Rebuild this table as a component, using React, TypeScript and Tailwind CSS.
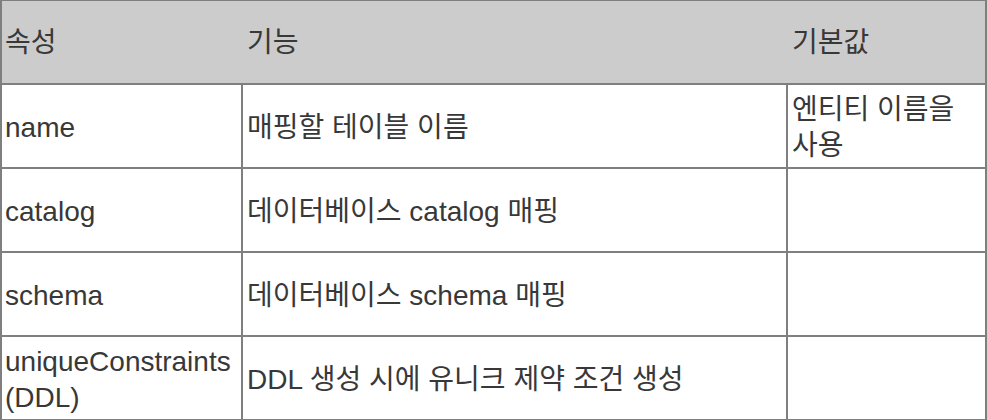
const rows = [
  { attr: ["name"], desc: "매핑할 테이블 이름", def: ["엔티티 이름을", "사용"] },
  { attr: ["catalog"], desc: "데이터베이스 catalog 매핑", def: [] },
  { attr: ["schema"], desc: "데이터베이스 schema 매핑", def: [] },
  { attr: ["uniqueConstraints", "(DDL)"], desc: "DDL 생성 시에 유니크 제약 조건 생성", def: [] },
]

export default function App() {
  return (
    <div
      className="w-[987px] h-[420px] overflow-hidden bg-white text-[#383838] text-[28px] leading-[36px]"
      style={{ fontFamily: '"Liberation Sans", Arial, "Noto Sans CJK KR", sans-serif' }}
    >
      <div className="grid grid-cols-[239px_545px_199px] h-[85px] bg-[#cccccc] border-t border-l-2 border-r-2 border-b-2 border-[#7f7f7f]">
        <div className="flex items-center pl-[3px] pt-[1px]">속성</div>
        <div className="flex items-center pl-[6px] pt-[1px]">기능</div>
        <div className="flex items-center pl-[6px] pt-[1px]">기본값</div>
      </div>
      {rows.map((r, i) => (
        <div
          key={`row-${i}`}
          className="grid grid-cols-[239px_545px_199px] h-[84px] border-l-2 border-r-2 border-b-2 border-[#7f7f7f]"
        >
          <div className="flex flex-col justify-center pl-[3px] pt-[3px]">
            {r.attr.map((t) => (
              <span key={t}>{t}</span>
            ))}
          </div>
          <div className="flex items-center pl-[4px] pt-[3px] border-l-2 border-[#7f7f7f]">{r.desc}</div>
          <div className="flex flex-col justify-center pl-[4px] pt-[3px] border-l-2 border-[#7f7f7f]">
            {r.def.map((t) => (
              <span key={t}>{t}</span>
            ))}
          </div>
        </div>
      ))}
    </div>
  )
}
